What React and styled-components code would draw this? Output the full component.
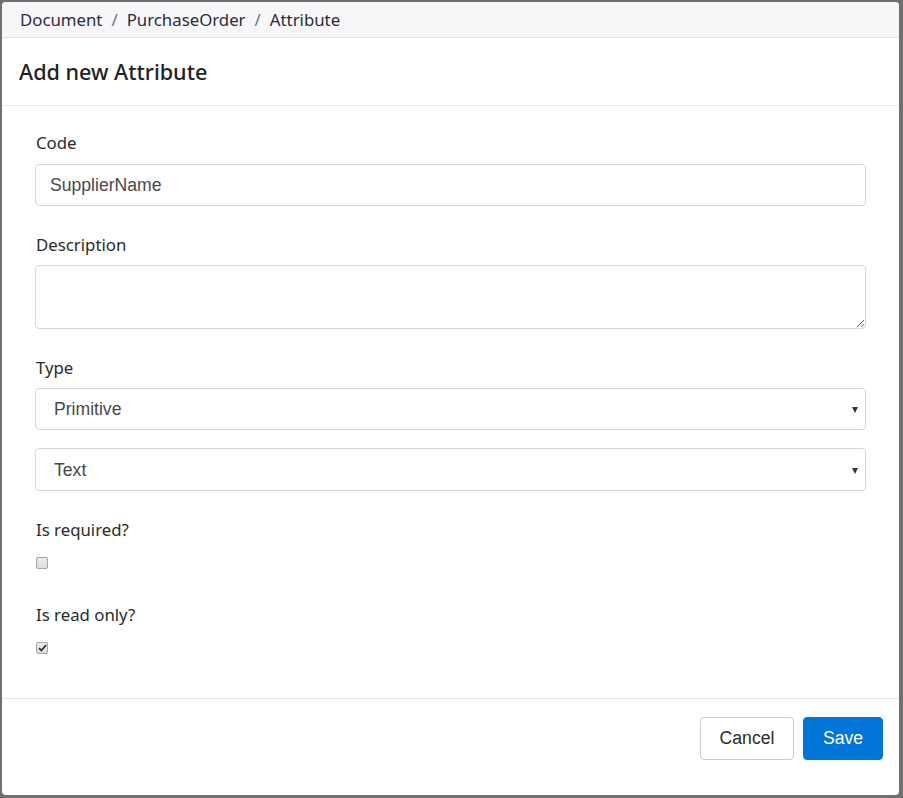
import styled, { createGlobalStyle } from 'styled-components';

const Global = createGlobalStyle`
  html, body {
    margin: 0;
    padding: 0;
    background: #707070;
  }
  body {
    font-family: "Noto Sans", "Open Sans", sans-serif;
  }
`;

const Modal = styled.div`
  margin: 2px 4px 3px 2px;
  width: 897px;
  height: 793px;
  background: #fff;
  border-radius: 4px;
  overflow: hidden;
  display: flex;
  flex-direction: column;
  box-sizing: border-box;
`;

const Breadcrumb = styled.nav`
  height: 36px;
  box-sizing: border-box;
  background: #f7f7f9;
  border-bottom: 1px solid #e6e6e6;
  display: flex;
  align-items: center;
  padding-left: 18px;
  font-size: 16.8px;
  color: #2b2b3d;
  span.sep {
    color: #6c757d;
    padding: 0 9px;
  }
`;

const Header = styled.div`
  height: 68px;
  box-sizing: border-box;
  border-bottom: 1px solid #e9ecef;
  display: flex;
  align-items: center;
  padding-left: 17px;
  h5 {
    margin: 0;
    font-size: 21.6px;
    font-weight: 500;
    color: #222;
  }
`;

const Body = styled.div`
  flex: 1;
  padding: 24px 33px 0 33px;
  display: flex;
  flex-direction: column;
  gap: 26px;
`;

const Group = styled.div`
  display: flex;
  flex-direction: column;
`;

const Label = styled.label`
  font-size: 16.8px;
  line-height: 26px;
  color: #292b2c;
  padding-left: 1px;
  margin-bottom: ${p => (p.$mb === undefined ? 8 : p.$mb)}px;
`;

const control = `
  box-sizing: border-box;
  width: 100%;
  border: 1px solid #d6d6d6;
  border-radius: 4px;
  background: #fff;
  font-family: "Liberation Sans", Arial, sans-serif;
  font-size: 17.6px;
  color: #464a4c;
  outline: none;
  margin: 0;
`;

const Input = styled.input`
  ${control}
  height: 42px;
  padding: 0 14px;
`;

const TextArea = styled.textarea`
  ${control}
  height: 64px;
  padding: 8px 14px;
  display: block;
`;

const SelectWrap = styled.div`
  position: relative;
  margin-top: ${p => p.$mt || 0}px;
`;

const Select = styled.select`
  ${control}
  appearance: none;
  height: ${p => p.$h || 42}px;
  padding: 0 18px;
`;

const Caret = styled.span`
  position: absolute;
  right: 8px;
  top: 50%;
  margin-top: -2px;
  width: 0;
  height: 0;
  border-left: 3.5px solid transparent;
  border-right: 3.5px solid transparent;
  border-top: 6px solid #333;
  pointer-events: none;
`;

const CheckRow = styled.div`
  height: 26px;
  margin-top: 7px;
  display: flex;
  align-items: center;
  padding-left: 1px;
`;

const Box = styled.span`
  width: 12px;
  height: 12px;
  box-sizing: border-box;
  border: 1px solid #a4a4a4;
  border-radius: 2px;
  background: linear-gradient(#ececec, #dcdcdc);
  display: flex;
  align-items: center;
  justify-content: center;
`;

const Footer = styled.div`
  height: 97px;
  box-sizing: border-box;
  border-top: 1px solid #e6e6e6;
  display: flex;
  justify-content: flex-end;
  align-items: flex-start;
  gap: 9px;
  padding: 18px 16px 0 0;
`;

const Button = styled.button`
  height: 43px;
  width: ${p => (p.$primary ? 80 : 94)}px;
  padding: 0;
  border-radius: 4px;
  font-family: "Liberation Sans", Arial, sans-serif;
  font-size: 17.6px;
  cursor: pointer;
  border: 1px solid ${p => (p.$primary ? '#0275d8' : '#cccccc')};
  background: ${p => (p.$primary ? '#0275d8' : '#fff')};
  color: ${p => (p.$primary ? '#fff' : '#292b2c')};
`;

function Checkbox({ checked }) {
  return (
    <Box role="checkbox" aria-checked={checked}>
      {checked && (
        <svg width="9" height="8" viewBox="0 0 9 8">
          <path d="M1 4.2 L3.3 6.5 L8 1.2" fill="none" stroke="#333" strokeWidth="1.8" />
        </svg>
      )}
    </Box>
  );
}

export default function App() {
  return (
    <>
      <Global />
      <Modal>
        <Breadcrumb>
          <span>Document</span>
          <span className="sep">/</span>
          <span>PurchaseOrder</span>
          <span className="sep">/</span>
          <span>Attribute</span>
        </Breadcrumb>
        <Header>
          <h5>Add new Attribute</h5>
        </Header>
        <Body>
          <Group>
            <Label>Code</Label>
            <Input defaultValue="SupplierName" />
          </Group>
          <Group>
            <Label $mb={7}>Description</Label>
            <TextArea />
          </Group>
          <Group>
            <Label $mb={7}>Type</Label>
            <SelectWrap>
              <Select defaultValue="Primitive">
                <option>Primitive</option>
              </Select>
              <Caret />
            </SelectWrap>
            <SelectWrap $mt={18}>
              <Select $h={43} defaultValue="Text">
                <option>Text</option>
              </Select>
              <Caret />
            </SelectWrap>
          </Group>
          <Group>
            <Label $mb={0}>Is required?</Label>
            <CheckRow>
              <Checkbox checked={false} />
            </CheckRow>
          </Group>
          <Group>
            <Label $mb={0}>Is read only?</Label>
            <CheckRow>
              <Checkbox checked />
            </CheckRow>
          </Group>
        </Body>
        <Footer>
          <Button>Cancel</Button>
          <Button $primary>Save</Button>
        </Footer>
      </Modal>
    </>
  );
}
